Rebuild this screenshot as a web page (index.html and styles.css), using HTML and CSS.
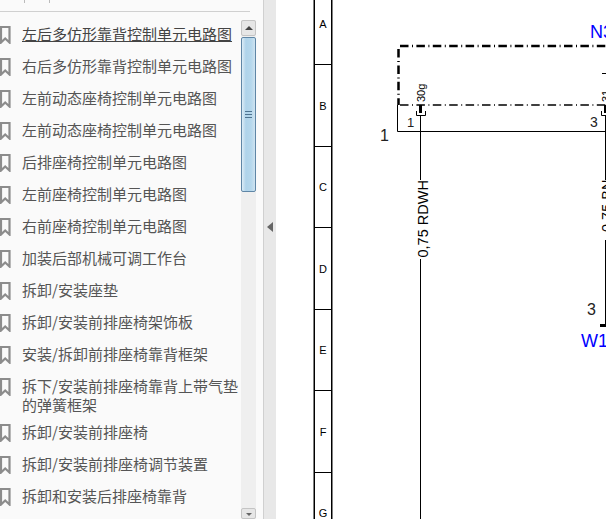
FILE: index.html
```html
<!DOCTYPE html>
<html lang="zh-CN">
<head>
    <meta charset="UTF-8">
    <meta name="viewport" content="width=device-width, initial-scale=1.0">
    <title>电路图</title>
    <link rel="stylesheet" href="styles.css">
</head>
<body>
    <svg width="0" height="0" class="defs">
        <symbol id="mark" viewBox="0 0 11 18">
            <path d="M1 1H9.5V16.5L5.2 12.5L1 16.5Z" fill="none" stroke="#8c8c8c" stroke-width="2.2"/>
        </symbol>
    </svg>

    <!-- Bookmarks panel -->
    <div class="sidebar">
        <div class="toolbar"><span class="tick"></span><span class="tick short"></span></div>
        <div class="panel">
            <ul class="list">
                <li class="row"><svg class="mark"><use href="#mark"/></svg><a class="current">左后多仿形靠背控制单元电路图</a></li>
                <li class="row"><svg class="mark"><use href="#mark"/></svg><a>右后多仿形靠背控制单元电路图</a></li>
                <li class="row"><svg class="mark"><use href="#mark"/></svg><a>左前动态座椅控制单元电路图</a></li>
                <li class="row"><svg class="mark"><use href="#mark"/></svg><a>左前动态座椅控制单元电路图</a></li>
                <li class="row"><svg class="mark"><use href="#mark"/></svg><a>后排座椅控制单元电路图</a></li>
                <li class="row"><svg class="mark"><use href="#mark"/></svg><a>左前座椅控制单元电路图</a></li>
                <li class="row"><svg class="mark"><use href="#mark"/></svg><a>右前座椅控制单元电路图</a></li>
                <li class="row"><svg class="mark"><use href="#mark"/></svg><a>加装后部机械可调工作台</a></li>
                <li class="row"><svg class="mark"><use href="#mark"/></svg><a>拆卸/安装座垫</a></li>
                <li class="row"><svg class="mark"><use href="#mark"/></svg><a>拆卸/安装前排座椅架饰板</a></li>
                <li class="row"><svg class="mark"><use href="#mark"/></svg><a>安装/拆卸前排座椅靠背框架</a></li>
                <li class="row"><svg class="mark"><use href="#mark"/></svg><a>拆下/安装前排座椅靠背上带气垫的弹簧框架</a></li>
                <li class="row"><svg class="mark"><use href="#mark"/></svg><a>拆卸/安装前排座椅</a></li>
                <li class="row"><svg class="mark"><use href="#mark"/></svg><a>拆卸/安装前排座椅调节装置</a></li>
                <li class="row"><svg class="mark"><use href="#mark"/></svg><a>拆卸和安装后排座椅靠背</a></li>
            </ul>
            <div class="scrollbar">
                <div class="scroll-btn"><span class="arrow-up"></span></div>
                <div class="thumb"><span class="grip"></span></div>
                <div class="track"></div>
                <div class="scroll-btn end"><span class="arrow-down"></span></div>
            </div>
        </div>
    </div>

    <div class="splitter"><span class="collapse"></span></div>

    <!-- Wiring diagram page -->
    <div class="page">
        <svg class="sheet" width="330" height="519" viewBox="276 0 330 519">
            <!-- zone ruler -->
            <line class="edge" x1="313.5" y1="0" x2="313.5" y2="519"/>
            <line class="edge" x1="332.5" y1="0" x2="332.5" y2="519"/>
            <path class="line" d="M314.5 0V519M331.5 0V519M315 64.5H331M315 146.5H331M315 227.5H331M315 309.5H331M315 390.5H331M315 472.5H331"/>
            <text class="zone" x="323" y="28">A</text>
            <text class="zone" x="323" y="110">B</text>
            <text class="zone" x="323" y="191">C</text>
            <text class="zone" x="323" y="273">D</text>
            <text class="zone" x="323" y="354">E</text>
            <text class="zone" x="323" y="436">F</text>
            <text class="zone" x="323" y="517">G</text>

            <!-- control unit outline -->
            <path class="dash" d="M400 46H606"/>
            <path class="dash" d="M398.5 49V105"/>
            <path class="dash thin" d="M400 105H606"/>
            <path class="line" d="M397.5 105V131.5H606"/>

            <!-- pin 1 -->
            <path class="stub" d="M420.5 105V113"/>
            <path class="line" d="M416.5 111V115.5H425.5V111"/>
            <path class="line" d="M420.5 115V180M420.5 259V519"/>
            <text class="pin" transform="translate(425 102) rotate(-90)">30g</text>
            <text class="num" x="407" y="127">1</text>
            <text class="side" x="380" y="141">1</text>
            <text class="wire" transform="translate(427.5 257.5) rotate(-90)">0,75 RDWH</text>

            <!-- pin 3 -->
            <path class="stub" d="M605.5 105V113"/>
            <path class="line" d="M601.5 111V115.5H606"/>
            <path class="line" d="M605.5 115V180M605.5 240V325"/>
            <path class="stub" d="M600 325.5H606"/>
            <text class="pin" transform="translate(610 102) rotate(-90)">31</text>
            <text class="num big" x="590" y="127">3</text>
            <text class="side" x="587" y="315">3</text>
            <text class="wire" transform="translate(612 232) rotate(-90)">0,75 BN</text>
            <path class="line" d="M602 73.5H606"/>

            <text class="ref" x="590" y="38">N3</text>
            <text class="ref" x="581" y="347">W1</text>
        </svg>
    </div>
</body>
</html>
```

FILE: styles.css
```css
html, body {
    margin: 0;
    height: 519px;
    overflow: hidden;
}
body {
    display: flex;
    background-color: white;
    font-family: "Liberation Sans", "Noto Sans CJK SC", sans-serif;
}
.defs {
    position: absolute;
}
.sidebar {
    width: 263px;
    height: 519px;
    flex: none;
    background-color: #fafafa;
    border-right: 1px solid #d0d0d0;
    overflow: hidden;
}
.toolbar {
    height: 11px;
    width: 226px;
    border-bottom: 1px solid #d0d0d0;
    display: flex;
    align-items: flex-start;
    padding-left: 24px;
    gap: 24px;
}
.tick {
    width: 1px;
    height: 3px;
    background-color: #bbb;
}
.panel {
    display: flex;
    height: 507px;
}
.list {
    list-style: none;
    margin: 6px 0 0;
    padding: 0;
    width: 241px;
    flex: none;
    font-family: "Noto Sans CJK SC", sans-serif;
    font-size: 15px;
    line-height: 19px;
    color: #555;
}
.row {
    display: flex;
    min-height: 32px;
    box-sizing: border-box;
    padding: 6px 0 2px 0;
}
.row a {
    margin-left: 11px;
}
.row .current {
    color: #444;
    text-decoration: underline;
}
.mark {
    width: 11px;
    height: 18px;
    flex: none;
    margin-top: 2px;
}
.scrollbar {
    width: 15px;
    margin-top: 8px;
    display: flex;
    flex-direction: column;
    background-color: #efefef;
}
.scroll-btn {
    height: 16px;
    box-sizing: border-box;
    border: 1px solid #c4c4c4;
    border-radius: 2px;
    background-color: #e6e6e6;
    display: flex;
    align-items: center;
    justify-content: center;
    flex: none;
}
.scroll-btn.end {
    height: 11px;
    align-items: flex-start;
    padding-top: 4px;
}
.arrow-up {
    border-left: 4px solid transparent;
    border-right: 4px solid transparent;
    border-bottom: 4px solid #444;
}
.arrow-down {
    border-left: 3px solid transparent;
    border-right: 3px solid transparent;
    border-top: 3px solid #666;
}
.thumb {
    height: 155px;
    margin-top: 1px;
    box-sizing: border-box;
    border: 1px solid #5f86a6;
    border-radius: 2px;
    background: linear-gradient(to right, #dcecf6, #afd3ea 30%, #b5d7ec 70%, #cfe3f0);
    display: flex;
    align-items: center;
    justify-content: center;
    flex: none;
}
.grip {
    width: 7px;
    height: 7px;
    background: repeating-linear-gradient(to bottom, #4f7491 0 1px, transparent 1px 3px);
}
.track {
    flex: 1;
}
.splitter {
    width: 12px;
    height: 519px;
    flex: none;
    background-color: #e8e8e8;
    display: flex;
    align-items: center;
}
.collapse {
    margin: 0 0 65px 3px;
    border-top: 5px solid transparent;
    border-bottom: 5px solid transparent;
    border-right: 6px solid #666;
}
.page {
    flex: 1;
    overflow: hidden;
}
.sheet {
    display: block;
}
.line {
    fill: none;
    stroke: #000;
    stroke-width: 1;
}
.edge {
    stroke: #808080;
    stroke-width: 1;
}
.stub {
    fill: none;
    stroke: #000;
    stroke-width: 3;
}
.dash {
    fill: none;
    stroke: #000;
    stroke-width: 2.5;
    stroke-dasharray: 8.5 3.5 1 3.4;
}
.dash.thin {
    stroke-width: 1.6;
}
.zone {
    font-size: 11px;
    text-anchor: middle;
}
.pin {
    font-size: 11px;
}
.num {
    font-size: 13px;
    fill: #222;
}
.num.big {
    font-size: 14px;
}
.side {
    font-size: 16px;
    fill: #222;
}
.wire {
    font-size: 14.5px;
}
.ref {
    font-size: 18px;
    fill: #0000ff;
}
```
